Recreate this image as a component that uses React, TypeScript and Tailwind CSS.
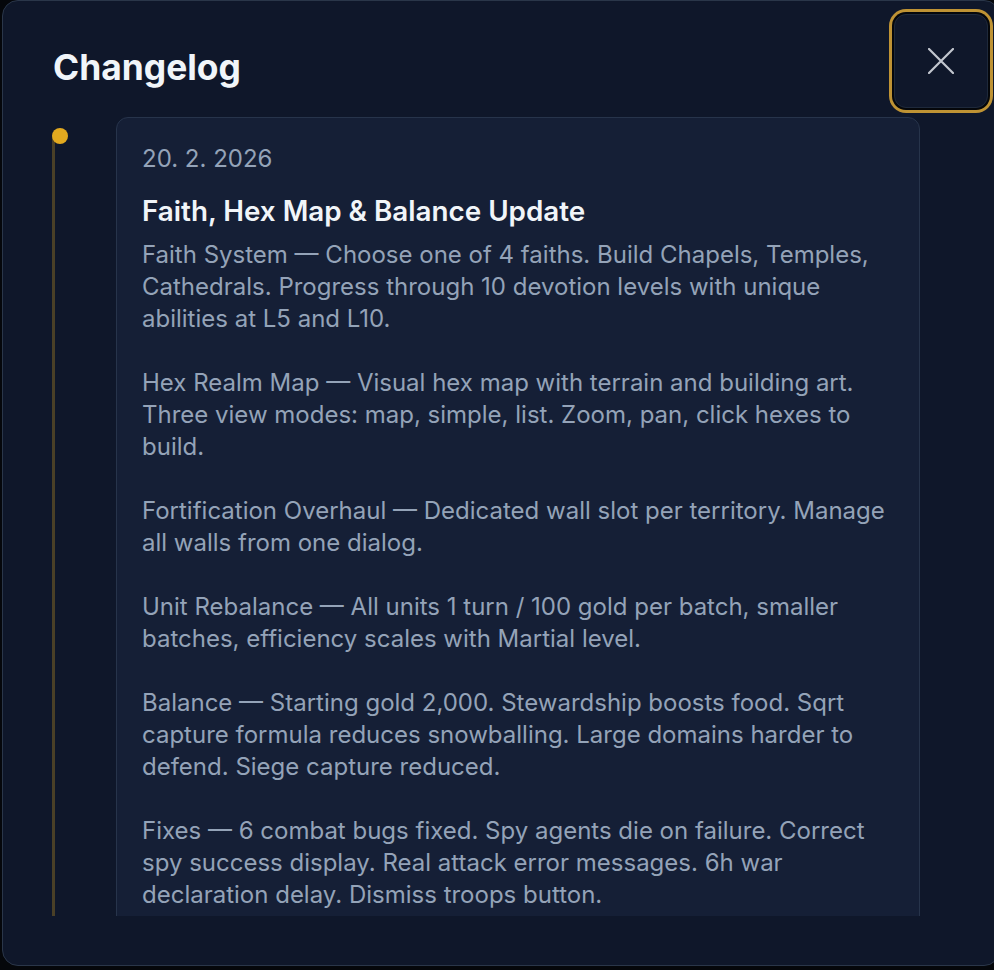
import React from "react";

const paragraphs = [
  "Faith System — Choose one of 4 faiths. Build Chapels, Temples, Cathedrals. Progress through 10 devotion levels with unique abilities at L5 and L10.",
  "Hex Realm Map — Visual hex map with terrain and building art. Three view modes: map, simple, list. Zoom, pan, click hexes to build.",
  "Fortification Overhaul — Dedicated wall slot per territory. Manage all walls from one dialog.",
  "Unit Rebalance — All units 1 turn / 100 gold per batch, smaller batches, efficiency scales with Martial level.",
  "Balance — Starting gold 2,000. Stewardship boosts food. Sqrt capture formula reduces snowballing. Large domains harder to defend. Siege capture reduced.",
  "Fixes — 6 combat bugs fixed. Spy agents die on failure. Correct spy success display. Real attack error messages. 6h war declaration delay. Dismiss troops button.",
];

export default function App() {
  return (
    <div
      className="relative h-[970px] w-[994px] overflow-hidden bg-[#05070b]"
      style={{ fontFamily: "Inter, 'Noto Sans', sans-serif" }}
    >
      <div className="absolute left-[2px] top-0 flex h-[966px] w-[998px] flex-col rounded-2xl border border-[#2a3649] bg-[#0f172a]">
        <div className="flex items-start justify-between pl-[50px] pr-[11px]">
          <h2 className="mt-[45px] text-[35.4px] font-bold leading-[44px] text-[#f1f5f9]">
            Changelog
          </h2>
          <button className="mt-[13px] flex h-[94px] w-[94px] items-center justify-center rounded-xl border border-[#1e293b] bg-[#0f172a] ring-[3px] ring-[#bf9334] ring-offset-2 ring-offset-[#05070b]">
            <svg width="26" height="26" viewBox="0 0 26 26" fill="none">
              <path
                d="M1 1L25 25M25 1L1 25"
                stroke="#c3c7cf"
                strokeWidth="2.2"
                strokeLinecap="round"
              />
            </svg>
          </button>
        </div>
        <div className="relative mt-[8px] h-[800px] overflow-hidden pt-[1px]">
          <div className="relative ml-[49px] mr-[79px] pl-[64px]">
            <div className="absolute left-0 top-[20px] h-[900px] w-[3px] bg-[#4a4027]" />
            <div className="absolute left-0 top-[11px] h-4 w-4 rounded-full bg-[#e2a91f]" />
            <div className="rounded-xl border border-[#27344b] bg-[#151f36] px-[25px] pb-[24px] pt-[25px]">
              <div className="text-[24px] leading-[32px] text-[#94a3b8]">20. 2. 2026</div>
              <h3 className="mt-[18px] text-[27.8px] font-semibold leading-[36px] text-[#f1f5f9]">
                Faith, Hex Map &amp; Balance Update
              </h3>
              <div className="mt-[10px] text-[24px] leading-[32px] text-[#94a3b8]">
                {paragraphs.map((p, i) => (
                  <p key={i} className={i > 0 ? "mt-[32px]" : ""}>
                    {p}
                  </p>
                ))}
              </div>
            </div>
          </div>
        </div>
      </div>
    </div>
  );
}
